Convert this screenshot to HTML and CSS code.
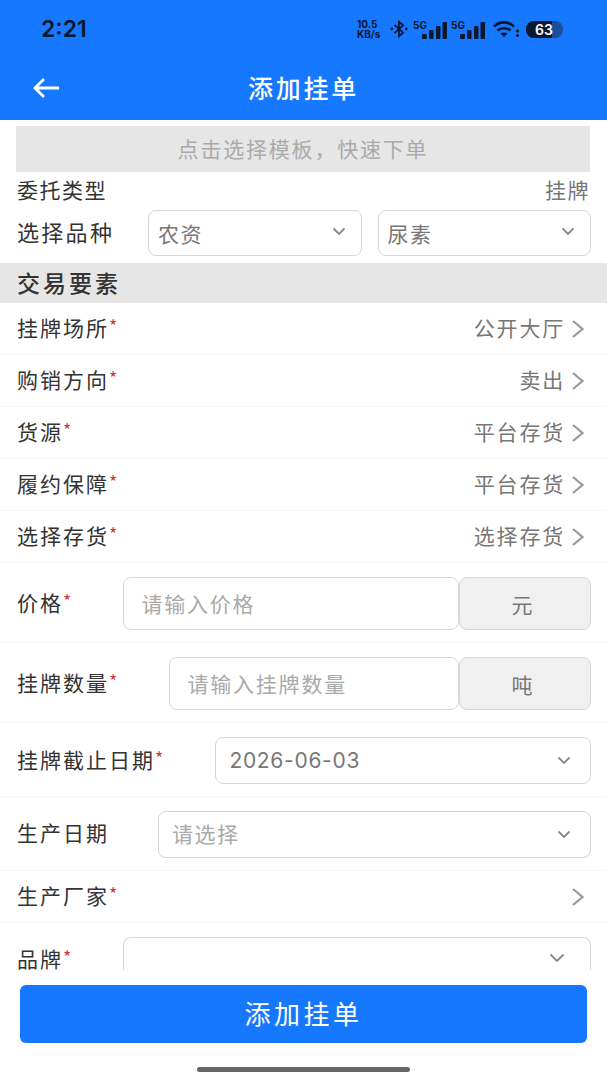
FILE: index.html

```html
<!DOCTYPE html>
<html lang="zh-CN">
<head>
    <meta charset="UTF-8">
    <meta name="viewport" content="width=device-width, initial-scale=1.0">
    <title>添加挂单</title>
    <link rel="stylesheet" href="styles.css">
</head>
<body>
    <header class="top">
        <div class="status">
            <span class="time">2:21</span>
            <div class="status-icons">
                <span class="speed">10.5<br>KB/s</span>
                <svg class="bt" width="20" height="20" viewBox="0 0 22 22"><path d="M6 6.500 15.500 15 11 19V3l4.500 4L6 15.500" fill="none" stroke="#0a1830" stroke-width="2"/><circle cx="3" cy="11" r="1.600" fill="#0a1830"/><circle cx="19" cy="11" r="1.600" fill="#0a1830"/></svg>
                <span class="signal"><span class="net">5G</span><svg width="25" height="17" viewBox="0 0 25 17"><rect x="0" y="12" width="5" height="5" rx="1" fill="#0a1830"/><rect x="7" y="8" width="4.500" height="9" rx="1" fill="#0a1830"/><rect x="14" y="4" width="4.500" height="13" rx="1" fill="#0a1830"/><rect x="20.500" y="0" width="4.500" height="17" rx="1" fill="#0a1830"/></svg></span>
                <span class="signal"><span class="net">5G</span><svg width="25" height="17" viewBox="0 0 25 17"><rect x="0" y="12" width="5" height="5" rx="1" fill="#0a1830"/><rect x="7" y="8" width="4.500" height="9" rx="1" fill="#0a1830"/><rect x="14" y="4" width="4.500" height="13" rx="1" fill="#0a1830"/><rect x="20.500" y="0" width="4.500" height="17" rx="1" fill="#0a1830"/></svg></span>
                <svg class="wifi" width="27" height="18" viewBox="0 0 27 18"><path d="M1 6.500C7 1 15 1 21 6.500M4.500 10.500C8 7.500 14 7.500 17.500 10.500" fill="none" stroke="#0a1830" stroke-width="2.600"/><path d="M11 17 7.500 13.500C9.500 12 12.500 12 14.500 13.500Z" fill="#0a1830"/><circle cx="24.500" cy="11" r="1.500" fill="#0a1830"/><circle cx="24.500" cy="15.500" r="1.500" fill="#0a1830"/></svg>
                <span class="battery"><span class="battery-fill"></span><span class="battery-num">63</span></span>
            </div>
        </div>
        <div class="nav">
            <svg class="back" width="28" height="24" viewBox="0 0 28 24"><path d="M27 12H3M12 3 3 12l9 9" fill="none" stroke="#fff" stroke-width="2.800"/></svg>
            <h1>添加挂单</h1>
        </div>
    </header>

    <main class="form">
        <div class="template">点击选择模板，快速下单</div>
        <div class="type-row">
            <span>委托类型</span>
            <span class="value">挂牌</span>
        </div>
        <div class="kind-row">
            <span class="kind-label">选择品种</span>
            <div class="select kind-select"><span>农资</span><svg class="down" width="14" height="9" viewBox="0 0 14 9"><path d="M1.500 1.500 7 7l5.500-5.500" fill="none" stroke="#888" stroke-width="1.800"/></svg></div>
            <div class="select kind-select"><span>尿素</span><svg class="down" width="14" height="9" viewBox="0 0 14 9"><path d="M1.500 1.500 7 7l5.500-5.500" fill="none" stroke="#888" stroke-width="1.800"/></svg></div>
        </div>
        <h2 class="section">交易要素</h2>

        <div class="row">
            <span class="label">挂牌场所<i>*</i></span>
            <span class="value">公开大厅</span>
            <svg class="more" width="14" height="20" viewBox="0 0 14 20"><path d="M2 2l9.500 8L2 18" fill="none" stroke="#999" stroke-width="2.200"/></svg>
        </div>
        <div class="row">
            <span class="label">购销方向<i>*</i></span>
            <span class="value">卖出</span>
            <svg class="more" width="14" height="20" viewBox="0 0 14 20"><path d="M2 2l9.500 8L2 18" fill="none" stroke="#999" stroke-width="2.200"/></svg>
        </div>
        <div class="row">
            <span class="label">货源<i>*</i></span>
            <span class="value">平台存货</span>
            <svg class="more" width="14" height="20" viewBox="0 0 14 20"><path d="M2 2l9.500 8L2 18" fill="none" stroke="#999" stroke-width="2.200"/></svg>
        </div>
        <div class="row">
            <span class="label">履约保障<i>*</i></span>
            <span class="value">平台存货</span>
            <svg class="more" width="14" height="20" viewBox="0 0 14 20"><path d="M2 2l9.500 8L2 18" fill="none" stroke="#999" stroke-width="2.200"/></svg>
        </div>
        <div class="row">
            <span class="label">选择存货<i>*</i></span>
            <span class="value">选择存货</span>
            <svg class="more" width="14" height="20" viewBox="0 0 14 20"><path d="M2 2l9.500 8L2 18" fill="none" stroke="#999" stroke-width="2.200"/></svg>
        </div>

        <div class="row field-row">
            <span class="label">价格<i>*</i></span>
            <div class="input-box"><span class="placeholder">请输入价格</span></div>
            <div class="unit">元</div>
        </div>
        <div class="row field-row">
            <span class="label">挂牌数量<i>*</i></span>
            <div class="input-box"><span class="placeholder">请输入挂牌数量</span></div>
            <div class="unit">吨</div>
        </div>
        <div class="row field-row">
            <span class="label">挂牌截止日期<i>*</i></span>
            <div class="select wide-select"><span class="date">2026-06-03</span><svg class="down" width="14" height="9" viewBox="0 0 14 9"><path d="M1.500 1.500 7 7l5.500-5.500" fill="none" stroke="#888" stroke-width="1.800"/></svg></div>
        </div>
        <div class="row field-row">
            <span class="label no-star">生产日期</span>
            <div class="select wide-select"><span class="placeholder">请选择</span><svg class="down" width="14" height="9" viewBox="0 0 14 9"><path d="M1.500 1.500 7 7l5.500-5.500" fill="none" stroke="#888" stroke-width="1.800"/></svg></div>
        </div>
        <div class="row">
            <span class="label">生产厂家<i>*</i></span>
            <svg class="more" width="14" height="20" viewBox="0 0 14 20"><path d="M2 2l9.500 8L2 18" fill="none" stroke="#999" stroke-width="2.200"/></svg>
        </div>
        <div class="row field-row brand-row">
            <span class="label">品牌<i>*</i></span>
            <div class="select wide-select"><span></span><svg class="down" width="16" height="10" viewBox="0 0 16 10"><path d="M1.500 1.500 8 8l6.500-6.500" fill="none" stroke="#888" stroke-width="1.800"/></svg></div>
        </div>
    </main>

    <footer class="bottom">
        <button class="submit">添加挂单</button>
        <div class="home-bar"></div>
    </footer>
</body>
</html>
```

FILE: styles.css

```css
* {
    box-sizing: border-box;
}
body {
    margin: 0;
    height: 1080px;
    display: flex;
    flex-direction: column;
    overflow: hidden;
    background-color: #fff;
    color: #333;
    font-family: "Noto Sans CJK SC", "Noto Sans", sans-serif;
    font-size: 21px;
    letter-spacing: 1.5px;
}
.top {
    height: 120px;
    flex: none;
    background-color: #1677ff;
}
.status {
    height: 60px;
    display: flex;
    align-items: center;
    justify-content: space-between;
    padding: 0 44px 2px 41px;
    color: #0a1830;
    letter-spacing: 0;
}
.time {
    font-family: Inter, sans-serif;
    font-size: 23px;
    font-weight: 600;
}
.status-icons {
    display: flex;
    align-items: center;
}
.speed {
    font-family: Inter, sans-serif;
    font-size: 10px;
    font-weight: 700;
    line-height: 10px;
    width: 30px;
}
.bt {
    margin: 0 4px 0 2px;
}
.signal {
    display: flex;
    align-items: flex-end;
    margin-right: 4px;
}
.net {
    font-family: Inter, sans-serif;
    font-size: 10px;
    font-weight: 700;
    line-height: 10px;
    width: 9px;
    margin-bottom: 9px;
}
.wifi {
    margin: 0 6px 0 4px;
}
.battery {
    position: relative;
    width: 37px;
    height: 17px;
    border-radius: 8px;
    background-color: #1a4f9e;
    overflow: hidden;
}
.battery-fill {
    display: block;
    width: 26px;
    height: 17px;
    background-color: #0a1830;
}
.battery-num {
    position: absolute;
    top: 0;
    left: 9px;
    color: #fff;
    font-family: Inter, sans-serif;
    font-size: 14px;
    font-weight: 600;
    line-height: 17px;
}
.nav {
    position: relative;
    height: 60px;
    display: flex;
    align-items: center;
    justify-content: center;
    padding-bottom: 6px;
}
.back {
    position: absolute;
    left: 32px;
    top: 16px;
}
h1 {
    margin: 0;
    color: #fff;
    font-size: 25px;
    font-weight: 500;
    letter-spacing: 2.7px;
}
.form {
    flex: none;
    height: 850px;
}
.template {
    height: 46px;
    margin: 6px 17px 0 16px;
    background-color: #e6e6e6;
    color: #aaa;
    text-align: center;
    line-height: 44px;
    letter-spacing: 1.8px;
}
.type-row {
    height: 38px;
    display: flex;
    align-items: center;
    justify-content: space-between;
    padding: 0 17px;
}
.type-row span {
    padding-bottom: 4px;
}
.value {
    color: #777;
}
.kind-row {
    height: 46px;
    display: flex;
    align-items: center;
    gap: 16px;
    padding: 0 16px 0 17px;
    margin-bottom: 7px;
}
.kind-label {
    width: 115px;
    padding-bottom: 4px;
    font-size: 22px;
    letter-spacing: 2.3px;
}
.select {
    height: 46px;
    display: flex;
    align-items: center;
    justify-content: space-between;
    border: 1px solid #d6d6d6;
    border-radius: 8px;
    background-color: #fff;
    color: #777;
}
.kind-select {
    flex: 1;
    padding: 2px 15px 0 9px;
}
.kind-select span {
    padding-bottom: 2px;
}
.kind-select .down {
    margin-top: -6px;
}
.section {
    height: 40px;
    margin: 0;
    padding-left: 17px;
    background-color: #e6e6e6;
    color: #333;
    font-size: 23px;
    font-weight: 500;
    line-height: 38px;
    letter-spacing: 3px;
}
.row {
    height: 52px;
    display: flex;
    align-items: center;
    padding: 0 22px 0 17px;
    border-bottom: 1px solid #f5f5f5;
}
.label {
    flex: none;
    padding-bottom: 4px;
    letter-spacing: 2px;
}
.label i {
    color: #d0393e;
    font-style: normal;
    font-size: 18px;
    letter-spacing: 0;
    vertical-align: 3px;
}
.row .value {
    margin-left: auto;
    margin-right: 6px;
    padding-bottom: 4px;
    letter-spacing: 1.8px;
}
.more {
    margin-left: auto;
}
.row .value + .more {
    margin-left: 0;
}
.field-row {
    height: auto;
    padding: 14px 16px 12px 17px;
}
.field-row .label {
    margin-right: 52px;
}
.field-row .no-star {
    margin-right: 49px;
    padding-bottom: 6px;
}
.input-box {
    flex: 1;
    height: 53px;
    display: flex;
    align-items: center;
    padding: 2px 16px 0 17px;
    border: 1px solid #d6d6d6;
    border-radius: 8px;
    background-color: #fff;
}
.input-box .placeholder {
    letter-spacing: 1.8px;
}
.placeholder {
    padding-bottom: 4px;
    color: #aaa;
}
.unit {
    flex: none;
    width: 132px;
    height: 53px;
    padding-right: 6px;
    border: 1px solid #d6d6d6;
    border-radius: 8px;
    background-color: #f0f0f0;
    color: #777;
    text-align: center;
    line-height: 53px;
    letter-spacing: 0;
}
.wide-select {
    flex: 1;
    height: 47px;
    padding: 0 19px 0 13px;
}
.date {
    font-family: Inter, sans-serif;
    letter-spacing: 0.7px;
}
.brand-row {
    align-items: flex-start;
    padding-bottom: 0;
    border-bottom: none;
}
.brand-row .label {
    margin-top: 8px;
    padding-bottom: 0;
    line-height: 22px;
}
.brand-row .wide-select {
    height: 33px;
    padding-top: 8px;
    padding-right: 25px;
    border-bottom: none;
    border-radius: 8px 8px 0 0;
}
.bottom {
    flex: 1;
    display: flex;
    flex-direction: column;
    align-items: center;
    padding-top: 15px;
}
.submit {
    width: 567px;
    height: 58px;
    padding-bottom: 4px;
    border: none;
    border-radius: 6px;
    background-color: #1677ff;
    color: #fff;
    font-family: inherit;
    font-size: 26px;
    letter-spacing: 3.5px;
}
.home-bar {
    width: 213px;
    height: 5px;
    margin-top: 24px;
    border-radius: 3px;
    background-color: #666;
}
```
